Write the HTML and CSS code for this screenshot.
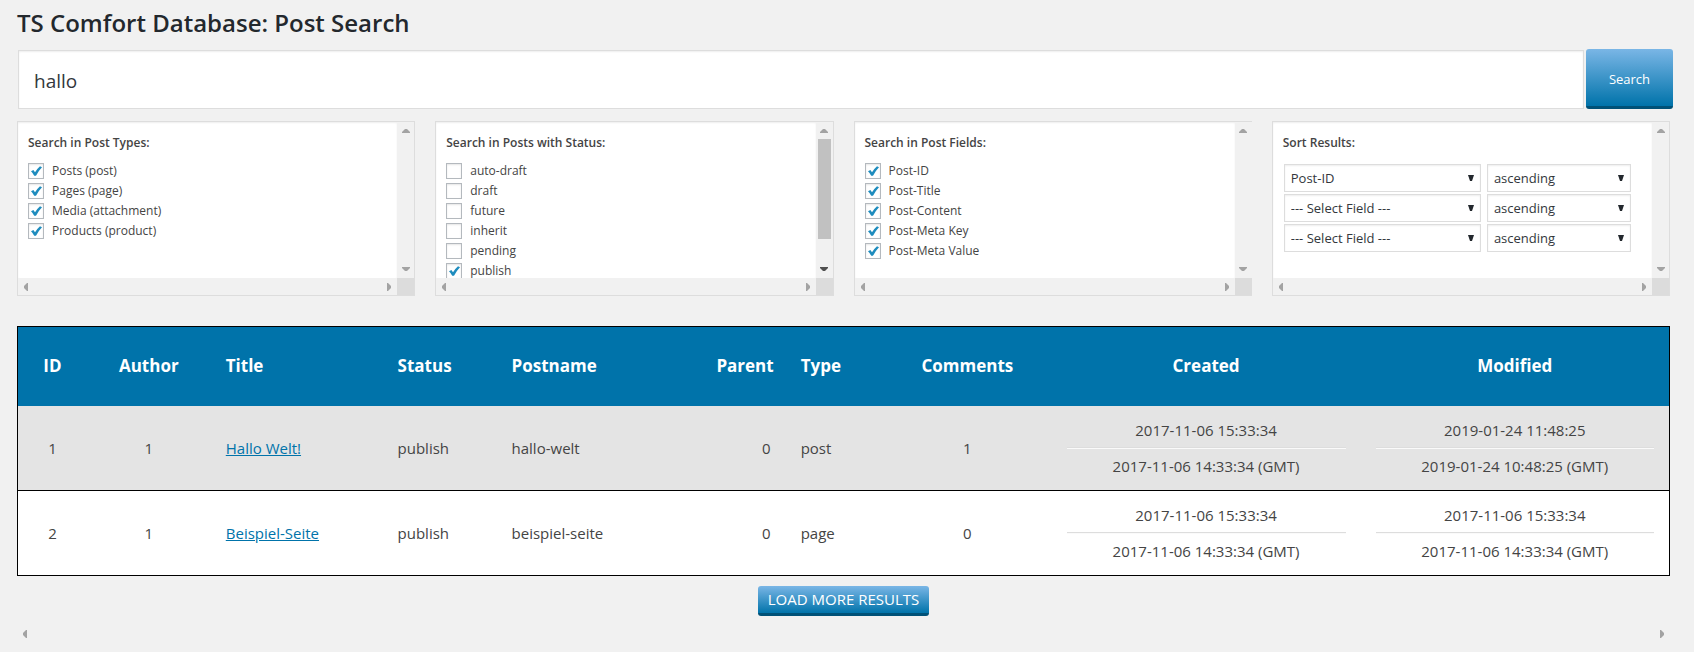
FILE: index.html
```html
<!DOCTYPE html>
<html lang="en">
<head>
<meta charset="utf-8">
<title>TS Comfort Database: Post Search</title>
<link rel="stylesheet" href="styles.css">
</head>
<body>
<svg class="sprite" aria-hidden="true">
  <symbol id="up" viewBox="0 0 8 4"><path d="M0 4V3L3 0H5L8 3V4Z"/></symbol>
  <symbol id="down" viewBox="0 0 8 4"><path d="M0 0V1L3 4H5L8 1V0Z"/></symbol>
  <symbol id="left" viewBox="0 0 4 8"><path d="M4 0H3L0 3V5L3 8H4Z"/></symbol>
  <symbol id="right" viewBox="0 0 4 8"><path d="M0 0H1L4 3V5L1 8H0Z"/></symbol>
  <symbol id="caret" viewBox="0 0 6 6"><path d="M0 0H6L4 6H2Z"/></symbol>
</svg>
<main class="page">
  <h1 class="page-title">TS Comfort Database: Post Search</h1>
  <form class="search">
    <div class="search-bar">
      <input class="search-input" type="text" value="hallo" aria-label="Search term">
      <button class="btn btn-search" type="submit">Search</button>
    </div>
    <div class="panels">
      <fieldset class="panel">
        <div class="panel-body">
          <h2 class="panel-title">Search in Post Types:</h2>
          <div class="checks">
            <label class="check"><input type="checkbox" checked>Posts (post)</label>
            <label class="check"><input type="checkbox" checked>Pages (page)</label>
            <label class="check"><input type="checkbox" checked>Media (attachment)</label>
            <label class="check"><input type="checkbox" checked>Products (product)</label>
          </div>
        </div>
        <div class="bar-v"><svg class="arrow-v"><use href="#up"/></svg><svg class="arrow-v"><use href="#down"/></svg></div>
        <div class="bar-h"><svg class="arrow-h"><use href="#left"/></svg><svg class="arrow-h"><use href="#right"/></svg></div>
        <div class="corner"></div>
      </fieldset>
      <fieldset class="panel">
        <div class="panel-body">
          <h2 class="panel-title">Search in Posts with Status:</h2>
          <div class="checks">
            <label class="check"><input type="checkbox">auto-draft</label>
            <label class="check"><input type="checkbox">draft</label>
            <label class="check"><input type="checkbox">future</label>
            <label class="check"><input type="checkbox">inherit</label>
            <label class="check"><input type="checkbox">pending</label>
            <label class="check"><input type="checkbox" checked>publish</label>
          </div>
        </div>
        <div class="bar-v"><svg class="arrow-v"><use href="#up"/></svg><div class="track"><div class="thumb"></div></div><svg class="arrow-v active"><use href="#down"/></svg></div>
        <div class="bar-h"><svg class="arrow-h"><use href="#left"/></svg><svg class="arrow-h"><use href="#right"/></svg></div>
        <div class="corner"></div>
      </fieldset>
      <fieldset class="panel panel-open">
        <div class="panel-body">
          <h2 class="panel-title">Search in Post Fields:</h2>
          <div class="checks">
            <label class="check"><input type="checkbox" checked>Post-ID</label>
            <label class="check"><input type="checkbox" checked>Post-Title</label>
            <label class="check"><input type="checkbox" checked>Post-Content</label>
            <label class="check"><input type="checkbox" checked>Post-Meta Key</label>
            <label class="check"><input type="checkbox" checked>Post-Meta Value</label>
          </div>
        </div>
        <div class="bar-v"><svg class="arrow-v"><use href="#up"/></svg><svg class="arrow-v"><use href="#down"/></svg></div>
        <div class="bar-h"><svg class="arrow-h"><use href="#left"/></svg><svg class="arrow-h"><use href="#right"/></svg></div>
        <div class="corner"></div>
      </fieldset>
      <fieldset class="panel">
        <div class="panel-body">
          <h2 class="panel-title">Sort Results:</h2>
          <div class="sorts">
            <div class="pick"><select aria-label="First sort field"><option>Post-ID</option></select><svg class="caret"><use href="#caret"/></svg></div>
            <div class="pick"><select aria-label="First sort order"><option>ascending</option><option>descending</option></select><svg class="caret"><use href="#caret"/></svg></div>
            <div class="pick"><select aria-label="Second sort field"><option>--- Select Field ---</option></select><svg class="caret"><use href="#caret"/></svg></div>
            <div class="pick"><select aria-label="Second sort order"><option>ascending</option><option>descending</option></select><svg class="caret"><use href="#caret"/></svg></div>
            <div class="pick"><select aria-label="Third sort field"><option>--- Select Field ---</option></select><svg class="caret"><use href="#caret"/></svg></div>
            <div class="pick"><select aria-label="Third sort order"><option>ascending</option><option>descending</option></select><svg class="caret"><use href="#caret"/></svg></div>
          </div>
        </div>
        <div class="bar-v"><svg class="arrow-v"><use href="#up"/></svg><svg class="arrow-v"><use href="#down"/></svg></div>
        <div class="bar-h"><svg class="arrow-h"><use href="#left"/></svg><svg class="arrow-h"><use href="#right"/></svg></div>
        <div class="corner"></div>
      </fieldset>
    </div>
  </form>
  <section class="results">
    <table class="table">
      <colgroup>
        <col class="c-id"><col class="c-author"><col class="c-title"><col class="c-status"><col class="c-name"><col class="c-parent"><col class="c-type"><col class="c-comments"><col class="c-date"><col class="c-date">
      </colgroup>
      <thead>
        <tr><th class="mid">ID</th><th class="mid">Author</th><th>Title</th><th>Status</th><th>Postname</th><th class="end">Parent</th><th>Type</th><th class="mid">Comments</th><th class="mid">Created</th><th class="mid">Modified</th></tr>
      </thead>
      <tbody>
        <tr>
          <td class="mid">1</td><td class="mid">1</td><td><a href="#">Hallo Welt!</a></td><td>publish</td><td>hallo-welt</td><td class="end">0</td><td>post</td><td class="mid">1</td>
          <td class="mid">2017-11-06 15:33:34<hr>2017-11-06 14:33:34 (GMT)</td>
          <td class="mid">2019-01-24 11:48:25<hr>2019-01-24 10:48:25 (GMT)</td>
        </tr>
        <tr>
          <td class="mid">2</td><td class="mid">1</td><td><a href="#">Beispiel-Seite</a></td><td>publish</td><td>beispiel-seite</td><td class="end">0</td><td>page</td><td class="mid">0</td>
          <td class="mid">2017-11-06 15:33:34<hr>2017-11-06 14:33:34 (GMT)</td>
          <td class="mid">2017-11-06 15:33:34<hr>2017-11-06 14:33:34 (GMT)</td>
        </tr>
      </tbody>
    </table>
    <button class="btn btn-more" type="button">LOAD MORE RESULTS</button>
    <div class="bar-h"><svg class="arrow-h"><use href="#left"/></svg><svg class="arrow-h"><use href="#right"/></svg></div>
  </section>
</main>
</body>
</html>
```
FILE: styles.css
```css
* { box-sizing: border-box; }
body {
  margin: 0;
  background: #f1f1f1;
  color: #444;
  font-family: "Open Sans", "Noto Sans", sans-serif;
  font-size: 12px;
}
.sprite { display: none; }
.page { padding: 8px 24px 0 17px; }
.page-title {
  margin: 0;
  color: #23282d;
  font-size: 24px;
  font-weight: 600;
  line-height: 30px;
}
.search-bar {
  display: flex;
  align-items: center;
  gap: 2px;
  margin: 11px -3px 0 1px;
}
.search-input {
  flex: 1;
  min-width: 0;
  height: 59px;
  padding: 3px 15px 0;
  border: 1px solid #ddd;
  background: #fff;
  box-shadow: inset 0 1px 2px rgba(0, 0, 0, .07);
  color: #32373c;
  font: inherit;
  font-size: 19px;
}
.btn {
  border: 0;
  border-bottom: 3px solid #005177;
  border-radius: 3px;
  background: linear-gradient(#7ab6e6, #0073aa);
  color: #fff;
  font: inherit;
  text-align: center;
}
.btn-search {
  width: 87px;
  height: 60px;
  padding-top: 3px;
  font-size: 13px;
}
.panels {
  display: grid;
  grid-template-columns: repeat(4, 1fr);
  gap: 20px;
  margin-top: 12px;
}
.panel {
  display: grid;
  grid-template-columns: 1fr 17px;
  grid-template-rows: 156px 17px;
  min-width: 0;
  margin: 0;
  padding: 0;
  border: 1px solid #ddd;
  background: #fff;
}
.panel-open { border-right: 0; }
.panel-body {
  overflow: hidden;
  padding: 11px 10px 0;
  box-shadow: inset 0 1px 2px rgba(0, 0, 0, .07);
}
.panel-title {
  margin: 0;
  font-size: 12px;
  font-weight: 600;
  line-height: 20px;
}
.checks {
  display: grid;
  justify-items: start;
  gap: 4px;
  margin-top: 10px;
}
.check {
  display: flex;
  align-items: center;
  gap: 8px;
  line-height: 16px;
}
.check input {
  appearance: none;
  width: 16px;
  height: 16px;
  margin: 0;
  border: 1px solid #b4b9be;
  background: #fff;
  box-shadow: inset 0 1px 2px rgba(0, 0, 0, .1);
}
.check input:checked {
  background: #fff url("data:image/svg+xml,%3Csvg xmlns='http://www.w3.org/2000/svg' viewBox='0 0 14 14'%3E%3Cpath d='M2 7.2L4.4 6L6 8.2Q8 5 11 2.3L13 3.2Q9.4 7 7 11.7H5.2Q4 9.2 2 7.2Z' fill='%231e8cbe'/%3E%3C/svg%3E");
}
.sorts {
  display: grid;
  grid-template-columns: 197fr 144fr;
  gap: 2px 6px;
  margin: 11px 11px 0 1px;
}
.pick { position: relative; }
.pick select {
  appearance: none;
  display: block;
  width: 100%;
  height: 28px;
  padding: 0 20px 0 6px;
  border: 1px solid #ddd;
  border-radius: 0;
  background: #fff;
  box-shadow: inset 0 1px 2px rgba(0, 0, 0, .07);
  color: #32373c;
  font: inherit;
  font-size: 13px;
}
.caret {
  position: absolute;
  top: 11px;
  right: 7px;
  width: 6px;
  height: 6px;
  fill: #23282d;
  pointer-events: none;
}
.bar-v, .bar-h {
  display: flex;
  align-items: center;
  justify-content: space-between;
  background: #f1f1f1;
  fill: #a3a3a3;
}
.bar-v { flex-direction: column; padding: 7px 0; }
.bar-h { height: 17px; padding: 0 6px; }
.arrow-v { flex: none; width: 8px; height: 4px; }
.arrow-h { flex: none; width: 4px; height: 8px; }
.active { fill: #505050; }
.track { flex: 1; align-self: stretch; padding: 6px 2px; }
.thumb { height: 82%; background: #c1c1c1; }
.corner { background: #dcdcdc; }
.results { margin-top: 30px; }
.table {
  width: 100%;
  table-layout: fixed;
  border-collapse: collapse;
  border: 1px solid #000;
  background: #fff;
  font-size: 15px;
  line-height: 22px;
}
.c-id { width: 4.2%; }
.c-author { width: 7.5%; }
.c-title { width: 10.4%; }
.c-status { width: 6.9%; }
.c-name { width: 12.4%; }
.c-parent { width: 5.1%; }
.c-type { width: 5.9%; }
.c-comments { width: 10.2%; }
.c-date { width: 18.7%; }
th, td { padding: 13px 15px; text-align: left; }
th {
  height: 79px;
  background: #0073aa;
  color: #fff;
  font-size: 17px;
  font-weight: 700;
}
tbody tr { border-bottom: 1px solid #000; }
tbody tr:first-child { background: #e4e4e4; }
.mid { text-align: center; }
.end { text-align: right; }
.table a { color: #0073aa; }
hr {
  margin: 6px 0;
  border: 0;
  border-top: 1px solid #ddd;
  border-bottom: 1px solid #fafafa;
}
.btn-more {
  display: block;
  height: 30px;
  margin: 10px auto 10px;
  padding: 0 10px;
  font-size: 15px;
}
```
